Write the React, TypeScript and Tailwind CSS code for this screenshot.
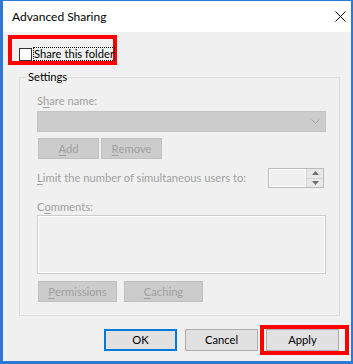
import React from "react";

function U({ children }: { children: React.ReactNode }) {
  return <span className="underline underline-offset-2 decoration-1">{children}</span>;
}

function DisabledButton({ w, children }: { w: string; children: React.ReactNode }) {
  return (
    <div
      className={`${w} h-[21px] bg-[#cccccc] border border-[#bfbfbf] flex items-center justify-center text-[#a0a0a0] leading-4 whitespace-nowrap`}
    >
      {children}
    </div>
  );
}

export default function App() {
  return (
    <div className="w-[353px] h-[364px] flex flex-col border-l-[3px] border-r-[2px] border-t border-b-[3px] border-[#2d79d5] font-['Lato',sans-serif] text-[11.2px] text-black overflow-hidden whitespace-nowrap">
      {/* Title bar */}
      <div className="h-[31px] bg-white flex items-center justify-between pl-[9px] pr-[5px] shrink-0">
        <span className="leading-4 text-[12px]">Advanced Sharing</span>
        <svg width="11" height="11" viewBox="0 0 11 11">
          <path d="M0.5 0.5 L10.5 10.5 M10.5 0.5 L0.5 10.5" stroke="#000" strokeWidth="1" />
        </svg>
      </div>

      {/* Body */}
      <div className="flex-1 bg-[#f0f0f0] flex flex-col">
        {/* highlighted checkbox */}
        <div className="ml-[5px] mt-[3px] w-[109px] h-[30px] border-4 border-[#ff0000] flex items-end pl-[7px]">
          <div className="flex items-center">
            <div className="w-[13px] h-[13px] border border-[#333333] bg-white" />
            <span className="ml-[1px] px-[1px] leading-[14px] outline outline-1 outline-dotted outline-black -outline-offset-1">
              Share this folder
            </span>
          </div>
        </div>

        {/* Settings group */}
        <div className="relative ml-[16px] mt-[12px] w-[321px] h-[239px] border border-[#dcdcdc] pl-[17px] flex flex-col">
          <span className="absolute left-[7px] top-[-9px] px-[1px] bg-[#f0f0f0] leading-4">Settings</span>

          <div className="mt-[15px] leading-4 text-[#a0a0a0]">
            S<U>h</U>are name:
          </div>
          <div className="mt-[2px] w-[289px] h-[21px] bg-[#cccccc] border border-[#c4c4c4] flex items-center justify-end pr-[5px]">
            <svg width="9" height="5" viewBox="0 0 9 5">
              <path d="M0.5 0.5 L4.5 4.5 L8.5 0.5" stroke="#a8a8a8" strokeWidth="1" fill="none" />
            </svg>
          </div>

          <div className="mt-[6px] ml-[1px] flex gap-[2px]">
            <DisabledButton w="w-[61px]">
              <U>A</U>dd
            </DisabledButton>
            <DisabledButton w="w-[61px]">
              <U>R</U>emove
            </DisabledButton>
          </div>

          <div className="mt-[9px] w-[287px] flex items-center justify-between">
            <span className="leading-4 text-[#a0a0a0]">
              <U>L</U>imit the number of simultaneous users to:
            </span>
            <div className="w-[56px] h-[20px] border border-[#bcbcbc] flex bg-[#f0f0f0]">
              <div className="flex-1 shadow-[inset_1px_1px_0_0_#ffffff,inset_-1px_-1px_0_0_#ffffff]" />
              <div className="w-[17px] flex flex-col border-l border-[#d4d4d4] bg-[#e8e8e8]">
                <div className="flex-1 flex items-center justify-center border-b border-[#d4d4d4]">
                  <svg width="7" height="4" viewBox="0 0 7 4">
                    <path d="M0 4 L3.5 0 L7 4 Z" fill="#707070" />
                  </svg>
                </div>
                <div className="flex-1 flex items-center justify-center">
                  <svg width="7" height="4" viewBox="0 0 7 4">
                    <path d="M0 0 L3.5 4 L7 0 Z" fill="#707070" />
                  </svg>
                </div>
              </div>
            </div>
          </div>

          <div className="mt-[11px] leading-4 text-[#a0a0a0]">
            C<U>o</U>mments:
          </div>
          <div className="w-[289px] h-[59px] border border-[#cccccc] bg-[#f0f0f0] shadow-[inset_0_0_0_1px_#ffffff]" />

          <div className="mt-[7px] ml-[1px] flex gap-[7px]">
            <DisabledButton w="w-[79px]">
              <U>P</U>ermissions
            </DisabledButton>
            <DisabledButton w="w-[79px]">
              <U>C</U>aching
            </DisabledButton>
          </div>
        </div>

        {/* Dialog buttons */}
        <div className="mt-[9px] pr-[2px] flex justify-end items-center">
          <div className="w-[73px] h-[22px] bg-[#e1e1e1] border-2 border-[#0078d7] flex items-center justify-center leading-4">
            OK
          </div>
          <div className="ml-[8px] w-[73px] h-[22px] bg-[#e1e1e1] border border-[#adadad] flex items-center justify-center leading-4">
            Cancel
          </div>
          <div className="ml-[2px] w-[89px] h-[30px] border-4 border-[#ff0000] flex items-center pl-[2px]">
            <div className="w-[73px] h-[22px] bg-[#e1e1e1] border border-[#adadad] flex items-center justify-center leading-4">
              Apply
            </div>
          </div>
        </div>
      </div>
    </div>
  );
}
